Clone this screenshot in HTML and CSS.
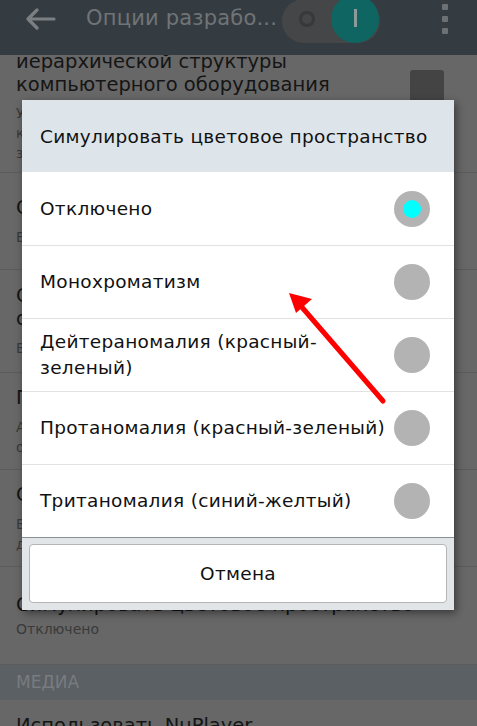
FILE: index.html
```html
<!DOCTYPE html>
<html lang="ru">
<head>
<meta charset="utf-8">
<link rel="stylesheet" href="styles.css">
</head>
<body>
<div class="screen">
  <header class="topbar">
    <svg class="back" width="32" height="22" viewBox="0 0 32 22"><path d="M30 11H4M13 2L4 11l9 9" fill="none" stroke="#7c7f81" stroke-width="3.2" stroke-linecap="round" stroke-linejoin="round"/></svg>
    <div class="title">Опции разрабо...</div>
    <div class="toggle">
      <span class="off-ring"></span>
      <span class="knob"><span class="knob-bar"></span></span>
    </div>
    <div class="overflow"><i></i><i></i><i></i></div>
  </header>

  <div class="list">
    <div class="list-inner">
      <div class="item first">
        <div class="item-text">
          <div class="item-title">Показывать границы элементов иерархической структуры компьютерного оборудования</div>
          <div class="item-sub">Уровень аппаратного ускорения<br>которое обновляется, выделяется<br>зеленым цветом</div>
        </div>
        <span class="checkbox"></span>
      </div>
      <div class="item h97">
        <div class="item-title">Отладка наложения GPU</div>
        <div class="item-sub">Выкл.</div>
      </div>
      <div class="item h103">
        <div class="item-title">Отладка операций непрямоугольного отсечения</div>
        <div class="item-sub">Выкл.</div>
      </div>
      <div class="item h97">
        <div class="item-title">Профилировать GPU-отрисовку</div>
        <div class="item-sub">Анализировать время<br>отрисовки</div>
      </div>
      <div class="item h97">
        <div class="item-title">Отключить наложения HW</div>
        <div class="item-sub">Всегда использовать GPU для<br>для компоновки экрана</div>
      </div>
      <div class="item h98 tight">
        <div class="item-title">Симулировать цветовое пространство</div>
        <div class="item-sub">Отключено</div>
      </div>
      <div class="section">МЕДИА</div>
      <div class="item last">
        <div class="item-title">Использовать NuPlayer</div>
      </div>
    </div>
  </div>

  <div class="dialog">
    <div class="dialog-head">Симулировать цветовое пространство</div>
    <div class="option"><span class="label">Отключено</span><span class="radio checked"></span></div>
    <div class="option"><span class="label">Монохроматизм</span><span class="radio"></span></div>
    <div class="option"><span class="label">Дейтераномалия (красный-<br>зеленый)</span><span class="radio"></span></div>
    <div class="option"><span class="label">Протаномалия (красный-зеленый)</span><span class="radio"></span></div>
    <div class="option"><span class="label">Тританомалия (синий-желтый)</span><span class="radio"></span></div>
    <div class="dialog-foot"><div class="btn">Отмена</div></div>
  </div>

  <svg class="arrow" width="477" height="726" viewBox="0 0 477 726">
    <line x1="383" y1="401" x2="300" y2="305" stroke="#ff0000" stroke-width="5" stroke-linecap="round"/>
    <polygon points="289,293 312,299 296,313" fill="#ff0000"/>
  </svg>
</div>
</body>
</html>
```

FILE: styles.css
```css
* { box-sizing: border-box; }
html, body { margin: 0; padding: 0; }
body {
  width: 477px;
  height: 726px;
  overflow: hidden;
  font-family: "DejaVu Sans", sans-serif;
  background: #676767;
}
.screen {
  position: relative;
  width: 477px;
  height: 726px;
  overflow: hidden;
  background: #676767;
}
.topbar {
  height: 55px;
  background: #353c41;
  display: flex;
  align-items: flex-start;
  position: relative;
  z-index: 1;
}
.back { margin: 8px 0 0 24px; flex: none; }
.title {
  margin: 6px 0 0 30px;
  font-size: 21px;
  color: #707477;
  white-space: nowrap;
  width: 198px;
  letter-spacing: 0.2px;
}
.toggle {
  position: relative;
  width: 98px;
  height: 44px;
  margin-left: -2px;
  background: #444647;
  border-radius: 22px;
  margin-top: -1px;
  display: flex;
  align-items: center;
  flex: none;
}
.off-ring {
  width: 16px;
  height: 16px;
  border: 3px solid #36393a;
  border-radius: 50%;
  margin-left: 17px;
  margin-top: -4px;
}
.knob {
  position: absolute;
  left: 49px;
  top: -4px;
  width: 48px;
  height: 48px;
  border-radius: 50%;
  background: #0e6562;
  display: flex;
  align-items: center;
  justify-content: center;
}
.knob-bar { width: 3px; height: 18px; background: #8e9a99; margin-top: -2px; }
.overflow {
  margin-left: auto;
  margin-right: 29px;
  margin-top: 4px;
  display: flex;
  flex-direction: column;
  gap: 6px;
}
.overflow i { display: block; width: 6px; height: 6px; background: #6e7173; border-radius: 1px; }

.list { height: 671px; overflow: hidden; }
.list-inner { margin-top: -42px; }
.item {
  padding: 0 16px;
  border-bottom: 1px solid #5c5c5c;
  color: #111;
  display: flex;
  flex-direction: column;
  justify-content: center;
}
.h97 { height: 97px; }
.h103 { height: 103px; }
.h98 { height: 98px; }
.item.first {
  flex-direction: row;
  align-items: flex-start;
  justify-content: flex-start;
  height: 160px;
  padding-top: 14px;
}
.item.last { border-bottom: none; height: 50px; }
.item-text { flex: 1; }
.item-title { font-size: 19.5px; line-height: 23px; color: #151515; }
.item.first .item-title { width: 380px; }
.item-sub { font-size: 14px; line-height: 20px; color: #3a3a3a; margin-top: 8px; }
.item.first .item-sub { margin-top: 7px; }
.tight .item-sub { margin-top: 3px; }
.checkbox {
  width: 34px;
  height: 34px;
  border-radius: 3px;
  background: #444;
  margin: 43px 17px 0 10px;
  flex: none;
}
.section {
  height: 35px;
  background: #5b6064;
  color: #787c7f;
  font-size: 17px;
  padding: 7px 16px 0;
}

.dialog {
  position: absolute;
  left: 22px;
  top: 100px;
  width: 432px;
  background: #fff;
  box-shadow: 2px 3px 8px rgba(0,0,0,0.45);
  z-index: 2;
}
.dialog-head {
  height: 72px;
  background: #dee5ea;
  padding: 0 18px;
  display: flex;
  align-items: center;
  font-size: 18.5px;
  letter-spacing: 0.3px;
  color: #111;
  white-space: nowrap;
}
.option {
  height: 73px;
  display: flex;
  align-items: center;
  padding: 0 24px 0 18px;
  border-top: 1px solid #e2e2e2;
  font-size: 18.5px;
  letter-spacing: 0.3px;
  line-height: 26px;
  color: #111;
}
.option:nth-of-type(2) { border-top: none; }
.label { flex: 1; }
.radio {
  width: 36px;
  height: 36px;
  border-radius: 50%;
  background: #b3b3b3;
  flex: none;
  display: flex;
  align-items: center;
  justify-content: center;
}
.radio.checked::after {
  content: "";
  width: 18px;
  height: 18px;
  border-radius: 50%;
  background: #00ffff;
}
.dialog-foot {
  background: #e1e5e7;
  border-top: 1px solid #8a9095;
  padding: 6px 7px 7px;
}
.btn {
  height: 59px;
  background: #fff;
  border: 1px solid #b3b6b8;
  border-radius: 4px;
  display: flex;
  align-items: center;
  justify-content: center;
  font-size: 18.5px;
  letter-spacing: 0.3px;
  color: #111;
}
.arrow { position: absolute; left: 0; top: 0; z-index: 3; pointer-events: none; }
```
